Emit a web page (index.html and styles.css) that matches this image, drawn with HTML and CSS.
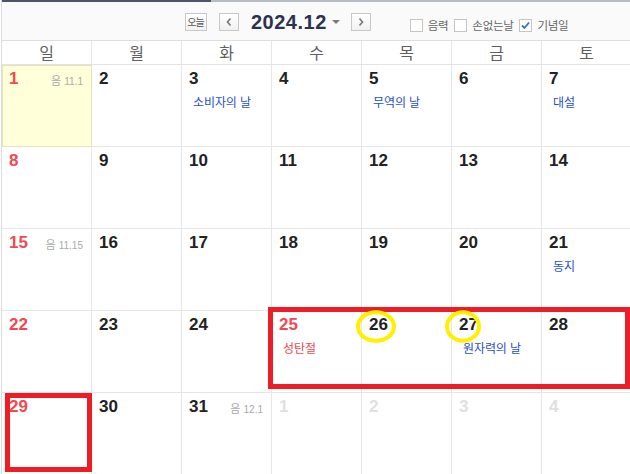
FILE: index.html
```html
<!DOCTYPE html>
<html lang="ko">
<head>
<meta charset="utf-8">
<link rel="stylesheet" href="styles.css">
</head>
<body>
<div class="app">
  <div class="topbar"><span class="tab"></span></div>
  <div class="toolbar">
    <div class="nav">
      <span class="btn today">오늘</span>
      <span class="btn arrow"><svg width="8" height="10" viewBox="0 0 8 10"><path d="M5.5 1.5 L2.5 5 L5.5 8.5" fill="none" stroke="#777" stroke-width="1.6"/></svg></span>
      <span class="title">2024.12</span>
      <span class="caret"></span>
      <span class="btn arrow next"><svg width="8" height="10" viewBox="0 0 8 10"><path d="M2.5 1.5 L5.5 5 L2.5 8.5" fill="none" stroke="#777" stroke-width="1.6"/></svg></span>
    </div>
    <div class="opts">
      <label class="opt"><span class="cb"></span>음력</label>
      <label class="opt"><span class="cb"></span>손없는날</label>
      <label class="opt"><span class="cb"><svg width="11" height="11" viewBox="0 0 11 11"><path d="M2 5.5 L4.5 8 L9 2.5" fill="none" stroke="#3b6fb6" stroke-width="1.8"/></svg></span>기념일</label>
    </div>
  </div>
  <div class="weekdays">
    <div>일</div><div>월</div><div>화</div><div>수</div><div>목</div><div>금</div><div>토</div>
  </div>
  <div class="grid">
    <div class="cell today-cell"><div class="head"><span class="num sun">1</span><span class="lunar">음 <small>11.1</small></span></div></div>
    <div class="cell"><div class="head"><span class="num">2</span></div></div>
    <div class="cell"><div class="head"><span class="num">3</span></div><div class="ev">소비자의 날</div></div>
    <div class="cell"><div class="head"><span class="num">4</span></div></div>
    <div class="cell"><div class="head"><span class="num">5</span></div><div class="ev">무역의 날</div></div>
    <div class="cell"><div class="head"><span class="num">6</span></div></div>
    <div class="cell"><div class="head"><span class="num">7</span></div><div class="ev">대설</div></div>

    <div class="cell"><div class="head"><span class="num sun">8</span></div></div>
    <div class="cell"><div class="head"><span class="num">9</span></div></div>
    <div class="cell"><div class="head"><span class="num">10</span></div></div>
    <div class="cell"><div class="head"><span class="num">11</span></div></div>
    <div class="cell"><div class="head"><span class="num">12</span></div></div>
    <div class="cell"><div class="head"><span class="num">13</span></div></div>
    <div class="cell"><div class="head"><span class="num">14</span></div></div>

    <div class="cell"><div class="head"><span class="num sun">15</span><span class="lunar">음 <small>11.15</small></span></div></div>
    <div class="cell"><div class="head"><span class="num">16</span></div></div>
    <div class="cell"><div class="head"><span class="num">17</span></div></div>
    <div class="cell"><div class="head"><span class="num">18</span></div></div>
    <div class="cell"><div class="head"><span class="num">19</span></div></div>
    <div class="cell"><div class="head"><span class="num">20</span></div></div>
    <div class="cell"><div class="head"><span class="num">21</span></div><div class="ev">동지</div></div>

    <div class="cell"><div class="head"><span class="num sun">22</span></div></div>
    <div class="cell"><div class="head"><span class="num">23</span></div></div>
    <div class="cell"><div class="head"><span class="num">24</span></div></div>
    <div class="cell"><div class="head"><span class="num sun">25</span></div><div class="ev red">성탄절</div></div>
    <div class="cell"><div class="head"><span class="num">26</span></div></div>
    <div class="cell"><div class="head"><span class="num">27</span></div><div class="ev">원자력의 날</div></div>
    <div class="cell"><div class="head"><span class="num">28</span></div></div>

    <div class="cell"><div class="head"><span class="num sun">29</span></div></div>
    <div class="cell"><div class="head"><span class="num">30</span></div></div>
    <div class="cell"><div class="head"><span class="num">31</span><span class="lunar">음 <small>12.1</small></span></div></div>
    <div class="cell"><div class="head"><span class="num other">1</span></div></div>
    <div class="cell"><div class="head"><span class="num other">2</span></div></div>
    <div class="cell"><div class="head"><span class="num other">3</span></div></div>
    <div class="cell"><div class="head"><span class="num other">4</span></div></div>
  </div>
  <svg class="marks" width="630" height="474" viewBox="0 0 630 474">
    <rect x="270.5" y="309.5" width="357" height="77" fill="none" stroke="#ee1d25" stroke-width="5"/>
    <rect x="7.5" y="395.5" width="82" height="74" fill="none" stroke="#ee1d25" stroke-width="5"/>
    <ellipse cx="376" cy="326.5" rx="18" ry="14.3" fill="none" stroke="#fff000" stroke-width="4"/>
    <ellipse cx="463" cy="326.5" rx="16" ry="14.3" fill="none" stroke="#fff000" stroke-width="4"/>
  </svg>
</div>
</body>
</html>
```
FILE: styles.css
```css
html, body {
  margin: 0;
  padding: 0;
  background: #fff;
}
body {
  width: 630px;
  height: 474px;
  overflow: hidden;
  font-family: "Noto Sans CJK KR", "Noto Sans", sans-serif;
}
.app {
  position: relative;
  width: 640px;
  margin-left: 1px;
  border-left: 1px solid #dcdcdc;
}
.topbar {
  display: flex;
  height: 2px;
  background: #b8bdc5;
}
.tab {
  width: 209px;
  background: #4a5668;
}
.toolbar {
  display: flex;
  align-items: center;
  height: 38px;
  background: #fafafa;
  padding-left: 183px;
  box-sizing: border-box;
}
.nav {
  display: flex;
  align-items: center;
  margin-top: 2px;
}
.btn {
  display: flex;
  align-items: center;
  justify-content: center;
  box-sizing: border-box;
  height: 18px;
  border: 1px solid #c8c8c8;
  background: linear-gradient(#ffffff, #f1f1f1);
  color: #555;
}
.today {
  width: 22px;
  font-size: 10px;
  letter-spacing: -1px;
  line-height: 1;
  padding-right: 1px;
}
.arrow {
  width: 20px;
  margin-left: 12px;
}
.title {
  margin-left: 12px;
  font-family: "Liberation Sans", "DejaVu Sans", sans-serif;
  font-weight: bold;
  font-size: 20px;
  color: #2c3250;
  letter-spacing: 0.5px;
}
.caret {
  margin-left: 5px;
  width: 0;
  height: 0;
  border-left: 4px solid transparent;
  border-right: 4px solid transparent;
  border-top: 4px solid #7a7a7a;
}
.next {
  margin-left: 11px;
}
.opts {
  display: flex;
  align-items: center;
  margin-left: 39px;
  margin-top: 8px;
}
.opt {
  display: flex;
  align-items: center;
  font-size: 11.5px;
  color: #666;
  margin-right: 6px;
  letter-spacing: -0.3px;
}
.cb {
  display: flex;
  align-items: center;
  justify-content: center;
  box-sizing: border-box;
  width: 13px;
  height: 13px;
  border: 1px solid #c4c4c4;
  background: #fff;
  margin-right: 5px;
}
.weekdays {
  display: grid;
  grid-template-columns: repeat(7, 90px);
  border-top: 1px solid #dedede;
  border-bottom: 1px solid #e3e3e3;
  background: #fff;
}
.weekdays div {
  height: 23px;
  line-height: 23px;
  text-align: center;
  font-size: 16px;
  color: #5f5f5f;
  border-right: 1px solid #e6e6e6;
}
.grid {
  display: grid;
  grid-template-columns: repeat(7, 90px);
  grid-auto-rows: 82px;
}
.cell {
  box-sizing: border-box;
  border-right: 1px solid #e6e6e6;
  border-bottom: 1px solid #e6e6e6;
  padding: 4px 8px 0 7px;
  background: #fff;
}
.today-cell {
  background: #ffffda;
  border: 1px solid #e4e4b8;
  padding: 3px 8px 0 6px;
}
.head {
  display: flex;
  justify-content: space-between;
  align-items: center;
  height: 20px;
}
.num {
  font-family: "Liberation Sans", "DejaVu Sans", sans-serif;
  font-weight: bold;
  font-size: 17px;
  color: #222;
}
.num.sun {
  color: #f5474f;
}
.num.other {
  color: #e0e0e0;
}
.lunar {
  font-size: 11px;
  color: #aaa;
  margin-top: 2px;
}
.lunar small {
  font-family: "Liberation Sans", sans-serif;
  font-size: 10px;
}
.ev {
  margin-top: 5px;
  margin-left: 4px;
  font-size: 12px;
  line-height: 16px;
  color: #1f50c8;
  letter-spacing: -0.1px;
}
.ev.red {
  color: #f0474f;
}
.marks {
  position: absolute;
  left: -2px;
  top: 0;
  pointer-events: none;
}
```
